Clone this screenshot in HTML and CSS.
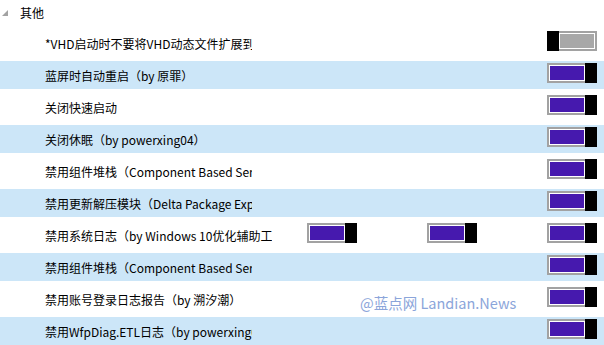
FILE: index.html
```html
<!DOCTYPE html>
<html lang="zh-CN">
<head>
    <meta charset="UTF-8">
    <meta name="viewport" content="width=device-width, initial-scale=1.0">
    <title>其他</title>
    <link rel="stylesheet" href="styles.css">
</head>
<body>

<div id="settings">
    <div class="group-head">
        <svg class="expander" width="6" height="6" viewBox="0 0 6 6"><polygon points="6,0 6,6 0,6" fill="#a3a3a3"/></svg>
        <span>其他</span>
    </div>

    <div class="list">
        <div class="row">
            <div class="label">*VHD启动时不要将VHD动态文件扩展到最大</div>
            <div class="toggles">
                <div class="toggle off"><span class="thumb"></span><span class="track"></span></div>
            </div>
        </div>
        <div class="row alt">
            <div class="label">蓝屏时自动重启（by 原罪）</div>
            <div class="toggles">
                <div class="toggle on"><span class="track"></span><span class="thumb"></span></div>
            </div>
        </div>
        <div class="row">
            <div class="label">关闭快速启动</div>
            <div class="toggles">
                <div class="toggle on"><span class="track"></span><span class="thumb"></span></div>
            </div>
        </div>
        <div class="row alt">
            <div class="label">关闭休眠（by powerxing04）</div>
            <div class="toggles">
                <div class="toggle on"><span class="track"></span><span class="thumb"></span></div>
            </div>
        </div>
        <div class="row">
            <div class="label">禁用组件堆栈（Component Based Servicing）</div>
            <div class="toggles">
                <div class="toggle on"><span class="track"></span><span class="thumb"></span></div>
            </div>
        </div>
        <div class="row alt">
            <div class="label">禁用更新解压模块（Delta Package Expander）</div>
            <div class="toggles">
                <div class="toggle on"><span class="track"></span><span class="thumb"></span></div>
            </div>
        </div>
        <div class="row">
            <div class="label wide">禁用系统日志（by Windows 10优化辅助工具）</div>
            <div class="toggles">
                <div class="toggle on"><span class="track"></span><span class="thumb"></span></div>
                <div class="toggle on"><span class="track"></span><span class="thumb"></span></div>
                <div class="toggle on"><span class="track"></span><span class="thumb"></span></div>
            </div>
        </div>
        <div class="row alt">
            <div class="label">禁用组件堆栈（Component Based Servicing）</div>
            <div class="toggles">
                <div class="toggle on"><span class="track"></span><span class="thumb"></span></div>
            </div>
        </div>
        <div class="row">
            <div class="label">禁用账号登录日志报告（by 溯汐潮）</div>
            <div class="toggles">
                <div class="toggle on"><span class="track"></span><span class="thumb"></span></div>
            </div>
        </div>
        <div class="row alt">
            <div class="label">禁用WfpDiag.ETL日志（by powerxing04）</div>
            <div class="toggles">
                <div class="toggle on"><span class="track"></span><span class="thumb"></span></div>
            </div>
        </div>
    </div>

    <!-- watermark over the list -->
    <div class="watermark">@蓝点网 Landian.News</div>
</div>

</body>
</html>
```

FILE: styles.css
```css
body {
    margin: 0;
    background-color: #fff;
    font-family: "Noto Sans CJK SC", "Noto Sans", sans-serif;
    font-size: 12px;
    color: #000;
}

#settings {
    position: relative;
    height: 345px;
    overflow: hidden;
}

.group-head {
    height: 27px;
    display: flex;
    align-items: center;
    padding-left: 2px;
    padding-bottom: 2px;
    box-sizing: border-box;
}

.group-head .expander {
    margin-right: 12px;
    margin-top: 1px;
}

.list {
    display: flex;
    flex-direction: column;
    gap: 4px;
    padding-top: 2px;
}

.row {
    height: 28px;
    display: flex;
    align-items: center;
    padding-left: 45px;
    padding-right: 7px;
}

.row.alt {
    background-color: #cce6f8;
}

.label {
    width: 207px;
    overflow: hidden;
    white-space: nowrap;
}

.label.wide {
    width: 227px;
}

.toggles {
    margin-left: auto;
    align-self: flex-start;
    margin-top: 2px;
    display: flex;
    gap: 70px;
}

/* switch: black thumb + framed track */
.toggle {
    width: 50px;
    height: 20px;
    display: flex;
}

.thumb {
    width: 12px;
    background-color: #000;
}

.track {
    flex: 1;
    border: 2px solid #a2a2a2;
    box-shadow: inset 0 0 0 1px #fff;
}

.toggle.on .track {
    background-color: #4619ae;
    border-right: none;
}

.toggle.off .track {
    background-color: #a8a8a8;
    border-left: none;
}

.watermark {
    position: absolute;
    left: 360px;
    top: 292px;
    font-size: 14.5px;
    color: #8ba5da;
    white-space: nowrap;
}
```
